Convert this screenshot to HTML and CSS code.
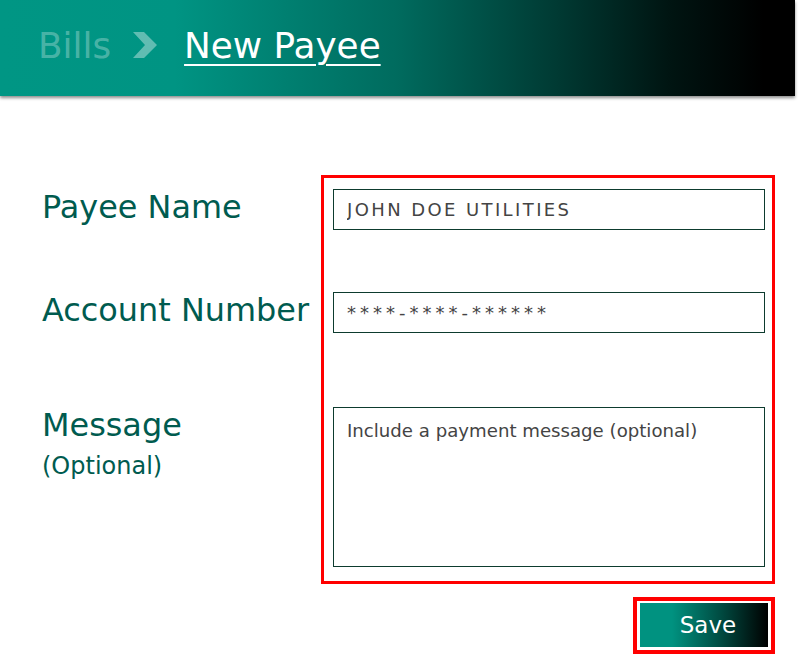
FILE: index.html
```html
<!DOCTYPE html>
<html lang="en">
<head>
<meta charset="utf-8">
<title>New Payee</title>
<link rel="stylesheet" href="styles.css">
</head>
<body>
<header class="topbar">
  <nav class="crumbs">
    <span class="crumb-prev">Bills</span>
    <svg class="crumb-sep" width="25" height="26" viewBox="0 0 25 26" aria-hidden="true">
      <polygon points="0,0 11,0 24,13 11,26 0,26 12,13"/>
    </svg>
    <span class="crumb-current">New Payee</span>
  </nav>
</header>

<main class="form-area">
  <div class="labels">
    <div class="label-row row-name"><span class="label">Payee Name</span></div>
    <div class="label-row row-account"><span class="label">Account Number</span></div>
    <div class="label-row row-message">
      <span class="label">Message</span>
      <span class="label-sub">(Optional)</span>
    </div>
  </div>

  <div class="right-col">
    <div class="fields">
      <input class="field field-name" type="text" value="JOHN DOE UTILITIES">
      <input class="field field-account" type="text" value="****-****-******">
      <textarea class="field field-message" placeholder="Include a payment message (optional)"></textarea>
    </div>
    <div class="actions">
      <div class="save-wrap">
        <button class="save-btn" type="button">Save</button>
      </div>
    </div>
  </div>
</main>
</body>
</html>
```

FILE: styles.css
```css
* {
  box-sizing: border-box;
}

html, body {
  margin: 0;
  padding: 0;
  background: #ffffff;
}

body {
  font-family: "DejaVu Sans", Verdana, sans-serif;
}

.topbar {
  width: calc(100% - 5px);
  height: 96px;
  background: linear-gradient(to right, #009684 0%, #009483 22%, #006b5e 50%, #003a33 70%, #001512 84%, #000000 96%);
  box-shadow: 0 2px 3px rgba(0, 0, 0, 0.45);
  padding-top: 26px;
}

.crumbs {
  display: flex;
  align-items: flex-start;
  padding-left: 38px;
  font-size: 35.8px;
  line-height: 40px;
}

.crumb-prev {
  color: rgba(255, 255, 255, 0.3);
}

.crumb-sep {
  fill: rgba(255, 255, 255, 0.38);
  margin-left: 22px;
  margin-right: 26px;
  margin-top: 6px;
}

.crumb-current {
  color: #ffffff;
  text-decoration: underline;
  text-decoration-thickness: 2px;
  text-underline-offset: 6px;
}

.form-area {
  display: flex;
  margin-top: 79px;
  padding-left: 42px;
}

.labels {
  width: 279px;
  padding-top: 14px;
  display: flex;
  flex-direction: column;
  color: #005b4f;
}

.label-row {
  display: flex;
  flex-direction: column;
}

.row-name {
  height: 103px;
}

.row-account {
  height: 115px;
}

.label {
  font-size: 31.9px;
  line-height: 36px;
}

.label-sub {
  font-size: 24px;
  line-height: 28px;
  margin-top: 9px;
}

.right-col {
  width: 454px;
  display: flex;
  flex-direction: column;
}

.fields {
  border: 3px solid #ff0000;
  padding: 11px 7px 14px 9px;
  display: flex;
  flex-direction: column;
}

.field {
  width: 432px;
  border: 1px solid #0d3b2e;
  border-radius: 0;
  background: #ffffff;
  font-family: "DejaVu Sans", Verdana, sans-serif;
  font-size: 18px;
  color: #444444;
  padding: 0 13px;
  margin: 0;
  outline: none;
}

.field-name {
  height: 41px;
  letter-spacing: 2.4px;
}

.field-account {
  height: 41px;
  margin-top: 62px;
  letter-spacing: 4px;
}

.field-message {
  height: 160px;
  margin-top: 74px;
  padding-top: 12px;
  font-size: 18.15px;
  resize: none;
  display: block;
}

.field-message::placeholder {
  color: #444444;
  opacity: 1;
}

.actions {
  display: flex;
  justify-content: flex-end;
  margin-top: 13px;
}

.save-wrap {
  border: 4px solid #ff0000;
  padding: 2px 3px 3px 3px;
}

.save-btn {
  display: block;
  width: 128px;
  height: 44px;
  border: none;
  padding: 0 0 0 8px;
  background: linear-gradient(to right, #009280 0%, #009280 25%, #004d43 62%, #000000 100%);
  color: #ffffff;
  font-family: "DejaVu Sans", Verdana, sans-serif;
  font-size: 23px;
}
```
